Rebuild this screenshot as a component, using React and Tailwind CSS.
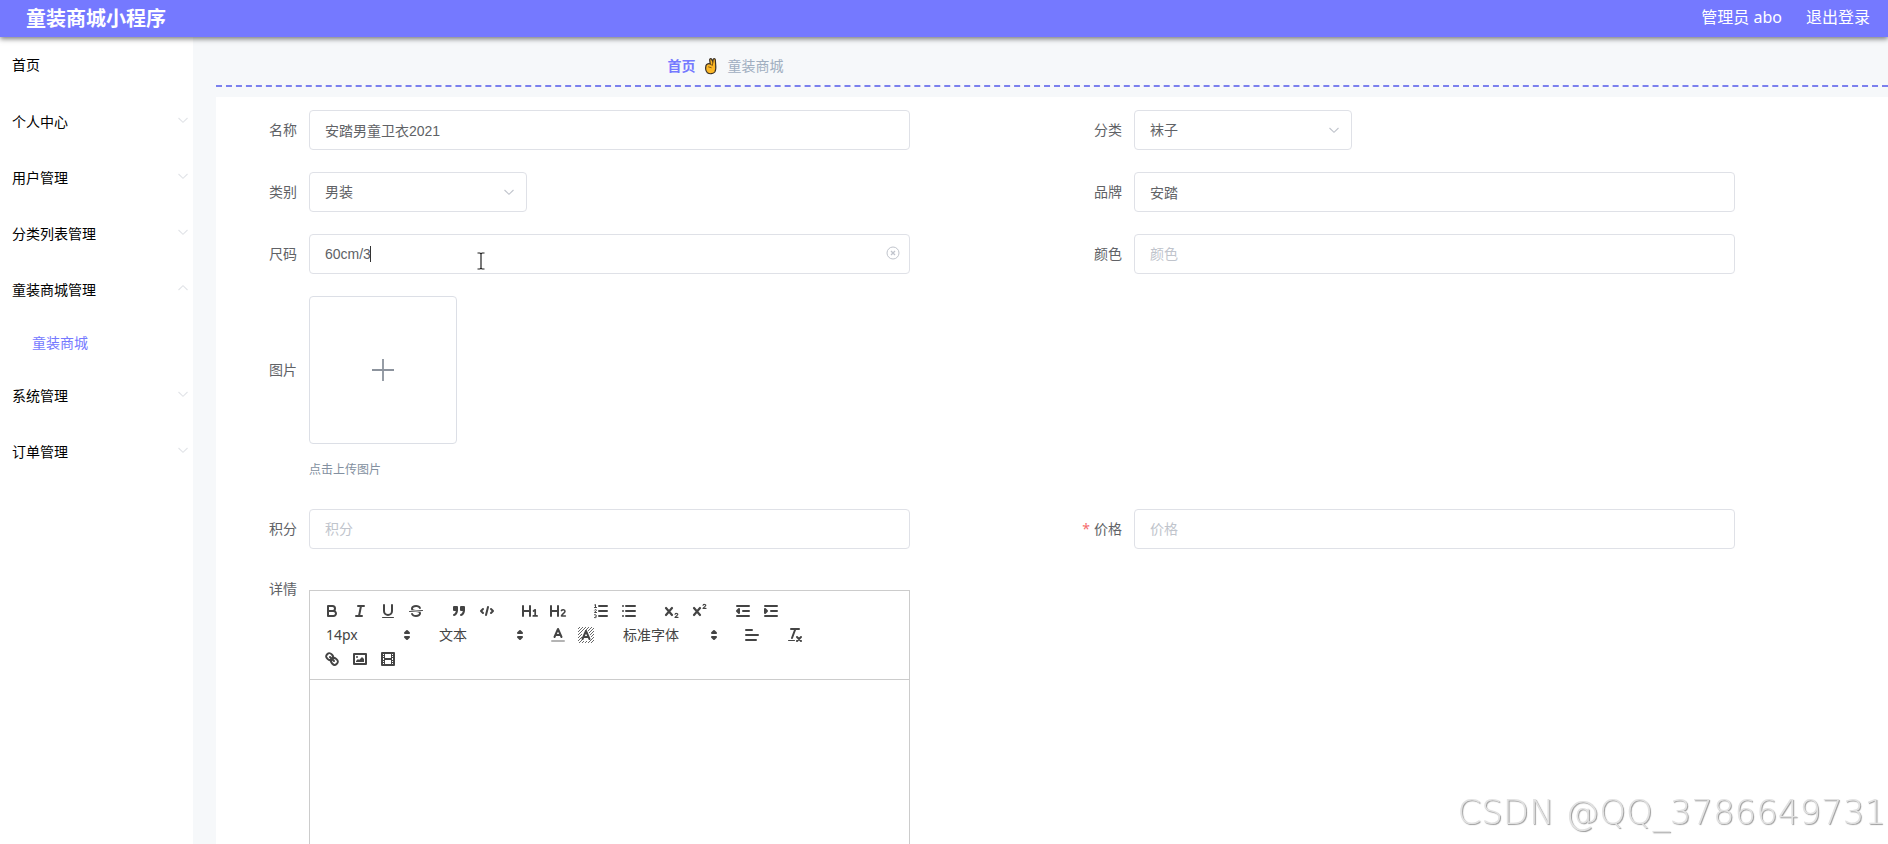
import React from "react";

const S = { fill: "none", stroke: "#444", strokeWidth: 2, strokeLinecap: "round", strokeLinejoin: "round" };

function Svg({ children }) {
  return (
    <svg viewBox="0 0 18 18" className="h-[18px] w-[18px]" aria-hidden="true" {...S}>
      {children}
    </svg>
  );
}

const fill = { fill: "#444", stroke: "none" };
const H = <path d="M2 4V14M9 4V14M2 9H9" />;

const ICONS = {
  bold: (
    <>
      <path d="M5,4H9.5A2.5,2.5,0,0,1,12,6.5v0A2.5,2.5,0,0,1,9.5,9H5Z" />
      <path d="M5,9h5.5A2.5,2.5,0,0,1,13,11.5v0A2.5,2.5,0,0,1,10.5,14H5Z" />
    </>
  ),
  italic: <path d="M7 4H13M5 14H11M8 14L10 4" />,
  underline: (
    <>
      <path d="M5,3V9a4,4,0,0,0,8,0V3" />
      <rect {...fill} x="3" y="15" width="12" height="1" rx="0.5" />
    </>
  ),
  strike: (
    <>
      <path strokeWidth="1" d="M15.5 8.5L2.5 9.5" />
      <path {...fill} d="M9.007,8C6.542,7.791,6,7.519,6,6.5,6,5.792,7.283,5,9,5c1.571,0,2.765.679,2.969,1.309a1,1,0,0,0,1.9-.617C13.356,4.106,11.354,3,9,3,6.2,3,4,4.538,4,6.5a3.2,3.2,0,0,0,.5,1.843Z" />
      <path {...fill} d="M8.984,10C11.457,10.208,12,10.479,12,11.5c0,.708-1.283,1.5-3,1.5-1.571,0-2.765-.679-2.969-1.309a1,1,0,1,0-1.9.617C4.644,13.894,6.646,15,9,15c2.8,0,5-1.538,5-3.5a3.2,3.2,0,0,0-.5-1.843Z" />
    </>
  ),
  quote: (
    <g fill="#444">
      <rect x="4" y="5" width="3" height="3" />
      <rect x="11" y="5" width="3" height="3" />
      <path d="M7,8c0,4.031-3,5-3,5" />
      <path d="M14,8c0,4.031-3,5-3,5" />
    </g>
  ),
  code: <path d="M5 7L3 9L5 11M13 7L15 9L13 11M10 5L8 13" />,
  h1: (
    <>
      {H}
      <path strokeWidth="1.7" d="M12.5 9L14.2 7.8V13.9M12.3 13.9H16.1" />
    </>
  ),
  h2: (
    <>
      {H}
      <path strokeWidth="1.5" d="M12.4 8.6C13 7.4 16 7.3 16 9.2C16 11 13 12 12.4 13.9H16.4" />
    </>
  ),
  ordered: (
    <>
      <path d="M7 4H15M7 9H15M7 14H15" />
      <path strokeWidth="1" d="M2.5 5.5H4.5M3.5 5.5V2.5L2.7 2.9M2.6 8C3 7.2 4.5 7.4 4.3 8.4L2.5 10.5H4.5M2.5 12.7C4.6 12.2 4.9 14 3.5 14.2C5 14.3 4.8 16.2 2.5 15.6" />
    </>
  ),
  bullet: <path d="M6 4H15M6 9H15M6 14H15M3 4V4M3 9V9M3 14V14" />,
  sub: (
    <>
      <path strokeWidth="2.2" d="M3 6L9 13M9 6L3 13" />
      <path strokeWidth="1.1" d="M12 12.3C12.4 11.1 14.9 11.1 14.8 12.5C14.7 13.5 12.4 14.2 12 15.4H15" />
    </>
  ),
  sup: (
    <>
      <path strokeWidth="2.2" d="M3 6L9 13M9 6L3 13" />
      <path strokeWidth="1.1" d="M12 3.3C12.4 2.1 14.9 2.1 14.8 3.5C14.7 4.5 12.4 5.2 12 6.4H15" />
    </>
  ),
  outdent: (
    <>
      <path d="M3 14H15M3 4H15M9 9H15" />
      <path fill="#444" d="M5 7V11L3 9Z" />
    </>
  ),
  indent: (
    <>
      <path d="M3 14H15M3 4H15M9 9H15" />
      <path fill="#444" d="M3 7V11L5 9Z" />
    </>
  ),
  color: (
    <>
      <path strokeOpacity="0.4" d="M3 15H15" />
      <path d="M5.5 11L9 3L12.5 11M11.6 9H6.4" />
    </>
  ),
  background: (
    <>
      <path
        strokeWidth="0.8"
        strokeLinecap="butt"
        d="M1 3L3 1M1 6L6 1M1 9L9 1M1 12L5 8M8 5L12 1M1 15L5 11M11 5L15 1M2 17L6 13M12 7L17 2M5 17L7 15M13 9L17 5M8 17L10 15M14 11L17 8M11 17L17 11M14 17L17 14"
      />
      <path d="M5.5 13L9 5L12.5 13M11.6 11H6.4" />
    </>
  ),
  align: <path d="M3 9H15M3 14H13M3 4H9" />,
  clean: (
    <>
      <path d="M5 3H13M6 12L9.35 3M11 11L15 15M15 11L11 15" />
      <rect {...fill} x="2" y="14" width="7" height="1" rx="0.5" />
    </>
  ),
  link: (
    <>
      <path d="M7 7L11 11" />
      <path d="M8.9,4.577a3.476,3.476,0,0,1,.36,4.679A3.476,3.476,0,0,1,4.577,8.9C3.185,7.5,2.035,6.4,4.217,4.217S7.5,3.185,8.9,4.577Z" />
      <path d="M13.423,9.1a3.476,3.476,0,0,0-4.679-.36,3.476,3.476,0,0,0,.36,4.679c1.392,1.392,2.5,2.542,4.679.36S14.815,10.5,13.423,9.1Z" />
    </>
  ),
  image: (
    <>
      <rect x="3" y="4" width="12" height="10" />
      <circle {...fill} cx="6" cy="7" r="1" />
      <path {...fill} d="M5 12V11L7 9L8 10L11 7L13 9V12Z" />
    </>
  ),
  video: (
    <>
      <rect x="3" y="3" width="12" height="12" />
      <path {...fill} d="M5 3h1v12H5ZM12 3h1v12h-1ZM5 8h8v2H5ZM3 5h3v1H3ZM3 7h3v1H3ZM3 10h3v1H3ZM3 12h3v1H3ZM12 5h3v1h-3ZM12 7h3v1h-3ZM12 10h3v1h-3ZM12 12h3v1h-3Z" />
    </>
  ),
};

function Tool({ icon, label }) {
  return (
    <button type="button" aria-label={label} className="flex h-6 w-7 items-center justify-center">
      <Svg>{ICONS[icon]}</Svg>
    </button>
  );
}

function Group({ children }) {
  return <div className="mr-[15px] flex">{children}</div>;
}

function Picker({ label, value, className }) {
  return (
    <div className={"relative flex h-6 items-center " + className}>
      <select
        aria-label={label}
        defaultValue={value}
        className="h-6 w-full appearance-none bg-transparent pl-2 text-sm text-[#444] outline-none"
      >
        <option>{value}</option>
      </select>
      <span className="pointer-events-none absolute right-0">
        <Svg>
          <path fill="#444" d="M7 11L9 13L11 11ZM7 7L9 5L11 7Z" />
        </Svg>
      </span>
    </div>
  );
}

function Chevron({ up, className }) {
  return (
    <svg
      viewBox="0 0 12 12"
      className={"h-3 w-3 " + className}
      fill="none"
      stroke="currentColor"
      strokeWidth="1.1"
      aria-hidden="true"
    >
      <path d={up ? "M1.5 8L6 3.7L10.5 8" : "M1.5 4L6 8.3L10.5 4"} />
    </svg>
  );
}

function NavItem({ label, open }) {
  return (
    <button type="button" className="flex h-14 w-full items-center justify-between pr-1 pl-3 text-left text-sm text-black">
      {label}
      <Chevron up={open} className="mb-1 text-[#e2e4e8]" />
    </button>
  );
}

function Field({ id, label, required, top, children }) {
  return (
    <div className={"flex pr-36 " + (top ? "items-start" : "items-center")}>
      <label htmlFor={id} className={"w-20 shrink-0 pr-3 text-right text-sm text-[#606266] " + (top ? "pt-2" : "")}>
        {required && <span className="mr-1 text-[#f56c6c]">*</span>}
        {label}
      </label>
      <div className="relative min-w-0 flex-1">{children}</div>
    </div>
  );
}

const box =
  "block h-10 w-full rounded border border-[#dfe1e7] bg-white px-[15px] font-['Liberation_Sans','Noto_Sans_CJK_SC',sans-serif] text-sm text-[#606266] outline-none placeholder:text-[#c0c4cc]";

function TextField({ id, label, value, required, children }) {
  return (
    <Field id={id} label={label} required={required}>
      <input id={id} type="text" defaultValue={value} placeholder={label} className={box} />
      {children}
    </Field>
  );
}

function SelectField({ id, label, value }) {
  return (
    <Field id={id} label={label}>
      <div className="relative w-[218px]">
        <select id={id} defaultValue={value} className={box + " appearance-none"}>
          <option>{value}</option>
        </select>
        <Chevron className="pointer-events-none absolute top-[14px] right-3 text-[#c0c4cc]" />
      </div>
    </Field>
  );
}

function FingersIcon() {
  return (
    <svg viewBox="0 0 14 18" className="h-[18px] w-[14px]" aria-hidden="true">
      <path
        d="M2 8.5C1.4 11 1.6 14 3.4 15.7C5.5 17.3 9.3 17 10.8 15C11.8 13.5 11.9 10 11.7 8L11.3 2.6C11.1 1.2 9.3 1.2 9.1 2.6L8.8 4.5L7.6 2.2C6.9 1.2 5.3 1.9 5.7 3.2L6.2 7C5 6.4 2.6 6.8 2 8.5Z"
        fill="#fdb827"
        stroke="#3a3127"
        strokeWidth="1.2"
      />
      <path d="M8.8 4.5L8.4 8.5M4.2 9.8L7.6 10.8M6.2 7L8.4 8.5" fill="none" stroke="#7a5310" strokeWidth="0.9" />
    </svg>
  );
}

export default function App() {
  return (
    <div className="flex h-screen flex-col overflow-hidden bg-[#f6f8fa] font-['Noto_Sans','Noto_Sans_CJK_SC',sans-serif]">
      <header className="relative z-10 flex h-[37px] shrink-0 items-center justify-between bg-[#7579ff] pr-[18px] pl-[26px] text-white shadow-[0_2px_5px_rgba(0,0,0,0.5)]">
        <h1 className="text-xl font-bold">童装商城小程序</h1>
        <div className="flex gap-6 pb-[3px] text-base">
          <span>管理员 abo</span>
          <a href="#logout">退出登录</a>
        </div>
      </header>

      <div className="flex min-h-0 flex-1">
        <nav className="w-[193px] shrink-0 bg-white">
          <a href="#home" className="mb-px flex h-14 items-center pl-3 text-sm text-black">
            首页
          </a>
          <NavItem label="个人中心" />
          <NavItem label="用户管理" />
          <NavItem label="分类列表管理" />
          <NavItem label="童装商城管理" open />
          <a href="#mall" className="flex h-[50px] items-center pl-8 text-sm text-[#7579ff]">
            童装商城
          </a>
          <NavItem label="系统管理" />
          <NavItem label="订单管理" />
        </nav>

        <main className="flex min-w-0 flex-1 flex-col overflow-y-auto pl-[23px] [scrollbar-width:none]">
          <div className="mb-[10px] flex h-[50px] shrink-0 items-center border-b-2 border-dashed border-[#7b80ee] pt-[10px] pl-[27%] text-sm">
            <a href="#home" className="font-bold text-[#7579ff]">
              首页
            </a>
            <span className="mx-[9px]">
              <FingersIcon />
            </span>
            <span className="text-[#a0aec0]">童装商城</span>
          </div>

          <form className="grid shrink-0 grid-cols-2 gap-y-[22px] bg-white pt-[13px] pr-[9px] pl-[13px]">
            <TextField id="name" label="名称" value="安踏男童卫衣2021" />
            <SelectField id="category" label="分类" value="袜子" />
            <SelectField id="kind" label="类别" value="男装" />
            <TextField id="brand" label="品牌" value="安踏" />
            <TextField id="size" label="尺码" value="60cm/3">
              <span className="absolute top-3 left-[61px] h-4 w-px bg-[#333]" />
              <button type="button" aria-label="清空" className="absolute top-3 right-[10px] text-[#c0c4cc]">
                <svg viewBox="0 0 14 14" className="h-[14px] w-[14px]" fill="none" stroke="currentColor" aria-hidden="true">
                  <circle cx="7" cy="7" r="6" />
                  <path strokeWidth="1.3" d="M5 5L9 9M9 5L5 9" />
                </svg>
              </button>
              <svg viewBox="0 0 8 18" className="absolute top-[18px] left-[168px] h-[18px] w-2" fill="none" stroke="#222" aria-hidden="true">
                <path strokeWidth="1.2" d="M4 1.5V16.5M0.5 1H3L4 2L5 1H7.5M0.5 17H3L4 16L5 17H7.5" />
              </svg>
            </TextField>
            <TextField id="colour" label="颜色" />

            <div className="col-span-2 flex flex-col">
              <div className="flex items-center">
                <label htmlFor="picture" className="w-20 shrink-0 pr-3 text-right text-sm text-[#606266]">
                  图片
                </label>
                <button
                  id="picture"
                  type="button"
                  aria-label="图片"
                  className="flex h-[148px] w-[148px] items-center justify-center rounded border border-[#dcdfe6] text-[#8c939d]"
                >
                  <svg viewBox="0 0 24 24" className="h-6 w-6" stroke="currentColor" strokeWidth="1.8" aria-hidden="true">
                    <path d="M12 1V23M1 12H23" />
                  </svg>
                </button>
              </div>
              <p className="mt-4 mb-[7px] ml-20 text-xs leading-5 text-[#8390a0]">点击上传图片</p>
            </div>

            <TextField id="points" label="积分" />
            <TextField id="price" label="价格" required />

            <Field id="detail" label="详情" top>
              <div className="mt-[19px] border border-[#ccc]">
                <div className="flex flex-wrap border-b border-[#ccc] p-2">
                  <Group>
                    <Tool icon="bold" label="粗体" />
                    <Tool icon="italic" label="斜体" />
                    <Tool icon="underline" label="下划线" />
                    <Tool icon="strike" label="删除线" />
                  </Group>
                  <Group>
                    <Tool icon="quote" label="引用" />
                    <Tool icon="code" label="代码" />
                  </Group>
                  <Group>
                    <Tool icon="h1" label="一级标题" />
                    <Tool icon="h2" label="二级标题" />
                  </Group>
                  <Group>
                    <Tool icon="ordered" label="有序列表" />
                    <Tool icon="bullet" label="无序列表" />
                  </Group>
                  <Group>
                    <Tool icon="sub" label="下标" />
                    <Tool icon="sup" label="上标" />
                  </Group>
                  <Group>
                    <Tool icon="outdent" label="减少缩进" />
                    <Tool icon="indent" label="增加缩进" />
                  </Group>
                  <Group>
                    <Picker label="字号" value="14px" className="w-[98px]" />
                  </Group>
                  <Group>
                    <Picker label="段落" value="文本" className="w-[98px]" />
                  </Group>
                  <Group>
                    <Tool icon="color" label="文字颜色" />
                    <Tool icon="background" label="背景颜色" />
                  </Group>
                  <Group>
                    <Picker label="字体" value="标准字体" className="w-[108px]" />
                  </Group>
                  <Group>
                    <Tool icon="align" label="对齐" />
                  </Group>
                  <Group>
                    <Tool icon="clean" label="清除格式" />
                  </Group>
                  <Group>
                    <Tool icon="link" label="链接" />
                    <Tool icon="image" label="插入图片" />
                    <Tool icon="video" label="插入视频" />
                  </Group>
                </div>
                <textarea id="detail" className="block h-80 w-full resize-none p-3 text-sm outline-none" />
              </div>
            </Field>
          </form>
        </main>
      </div>

      <p className="pointer-events-none fixed right-[2px] bottom-3 font-['DejaVu_Sans',sans-serif] text-[34px] leading-10 font-extralight text-[#e2e2e2] [text-shadow:1px_1px_1px_#999]">
        CSDN @QQ_3786649731
      </p>
    </div>
  );
}
